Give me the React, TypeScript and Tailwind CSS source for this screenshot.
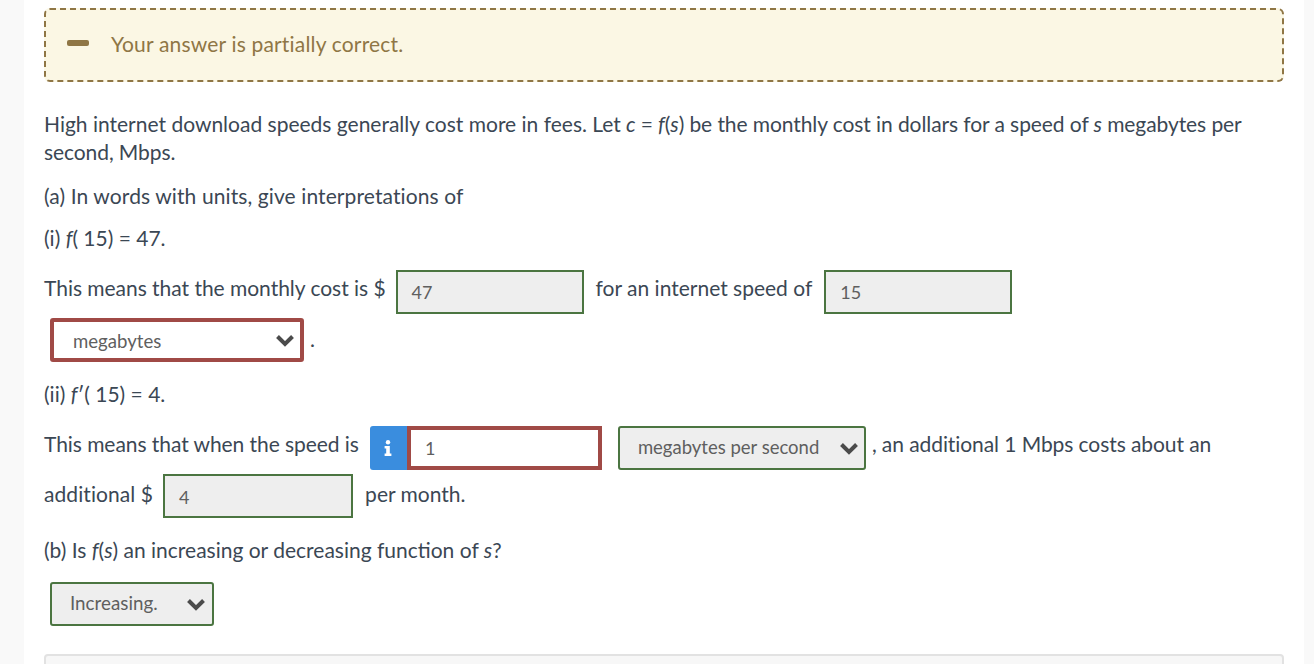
function Chevron({ className }: { className: string }) {
  return (
    <svg viewBox="0 0 20 14" className={`w-5 h-[14px] shrink-0 ${className}`} fill="none">
      <path d="M2.5 3.5 L10 11 L17.5 3.5" stroke="#4b4b4b" strokeWidth="4" />
    </svg>
  );
}

function InfoIcon() {
  return (
    <svg viewBox="0 0 8 16" className="w-2 h-4" fill="#fff">
      <circle cx="4" cy="2.2" r="2.2" />
      <path d="M0.6 6h5.2v7.4h1.6V16H0.6v-2.6h1.6V8.6H0.6z" />
    </svg>
  );
}

function FilledInput({ value, className }: { value: string; className: string }) {
  return (
    <div
      className={`${className} h-11 shrink-0 border-2 border-[#4b7541] bg-[#eeeeee] pl-[14px] flex items-center text-[18px] text-[#5f5f5f]`}
    >
      {value}
    </div>
  );
}

export default function App() {
  return (
    <div
      className="h-[664px] overflow-hidden bg-[#f9f9f9] pl-6 pr-[10px] text-[21px] leading-7 text-[#3b4754]"
      style={{ fontFamily: "Lato, sans-serif" }}
    >
      <div className="h-full bg-white px-5 pt-2">
        {/* alert */}
        <div className="h-[74px] rounded-md border-2 border-dashed border-[#8f7645] bg-[#fbf7e4] flex items-center pl-[21px] text-[#8f7645]">
          <span className="w-[22px] h-[6px] rounded-[2px] bg-[#8f7645] -mt-[4px]" />
          <span className="ml-[22px] -mt-[3px] tracking-[0.18px]">Your answer is partially correct.</span>
        </div>

        <p className="mt-7">
          High internet download speeds generally cost more in fees.{" "}
          <span className="tracking-[-0.085px]">
            Let <i>c</i> = <i>f</i>(<i>s</i>) be the monthly cost in dollars for a speed of <i>s</i> megabytes per
            second, Mbps.
          </span>
        </p>
        <p className="mt-4 tracking-[0.1px]">(a) In words with units, give interpretations of</p>
        <p className="mt-[14px]">
          (i) <i>f</i>( 15) = 47.
        </p>

        <div className="mt-[18px] flex items-start h-11">
          <span className="mt-[4px] tracking-[-0.03px]">This means that the monthly cost is $</span>
          <div className="ml-[10px]">
            <FilledInput value="47" className="w-[188px] pb-[1px]" />
          </div>
          <span className="ml-3 mt-[4px]">for an internet speed of</span>
          <div className="ml-3">
            <FilledInput value="15" className="w-[188px] pb-[1px]" />
          </div>
        </div>

        <div className="mt-1 ml-[6px] flex items-center">
          <div className="w-[254px] h-11 rounded-[3px] border-4 border-[#a04a46] bg-white flex items-center justify-between pl-[19px] pr-[3px] text-[18.6px] text-[#5f5f5f]">
            <span className="mt-[2px]">megabytes</span>
            <Chevron className="mr-[2px]" />
          </div>
          <span className="ml-[6px] -mt-[2px]">.</span>
        </div>

        <p className="mt-[18px]">
          (ii) <i>f</i>′( 15) = 4.
        </p>

        <div className="mt-[18px] flex items-start h-11">
          <span className="mt-[4px] tracking-[-0.06px]">This means that when the speed is</span>
          <div className="ml-[11px] w-[37px] h-11 rounded-l-[3px] bg-[#3a8dde] flex items-center justify-center">
            <InfoIcon />
          </div>
          <div className="w-[195px] h-11 border-4 border-[#a04a46] bg-white flex items-center pl-[14px] pb-[1px] text-[18px] text-[#5f5f5f]">
            1
          </div>
          <div className="ml-[16px] w-[248px] h-11 rounded-[3px] border-2 border-[#4b7541] bg-[#eeeeee] flex items-center justify-between pl-[18px] pr-[5px] text-[18.5px] text-[#5f5f5f]">
            <span className="-mt-[2px]">megabytes per second</span>
            <Chevron className="" />
          </div>
          <span className="ml-[6px] mt-[4px] tracking-[-0.08px]">, an additional 1 Mbps costs about an</span>
        </div>

        <div className="mt-1 flex items-start h-11">
          <span className="mt-[6px] tracking-[0.08px]">additional $</span>
          <div className="ml-[10px]">
            <FilledInput value="4" className="w-[190px] pt-[1px]" />
          </div>
          <span className="ml-3 mt-[6px]">per month.</span>
        </div>

        <p className="mt-[18px]">
          (b) Is <i>f</i>(<i>s</i>) an increasing or decreasing function of <i>s</i>?
        </p>

        <div className="mt-[18px] ml-[6px] w-[164px] h-11 rounded-[3px] border-2 border-[#4b7541] bg-[#eeeeee] flex items-center justify-between pl-[18px] pr-[6px] text-[18.8px] text-[#5f5f5f]">
          <span className="-mt-[2px]">Increasing.</span>
          <Chevron className="" />
        </div>

        <div className="mt-7 h-[40px] rounded-t-[4px] border-2 border-[#e2e2e2] bg-[#f7f7f7]" />
      </div>
    </div>
  );
}
